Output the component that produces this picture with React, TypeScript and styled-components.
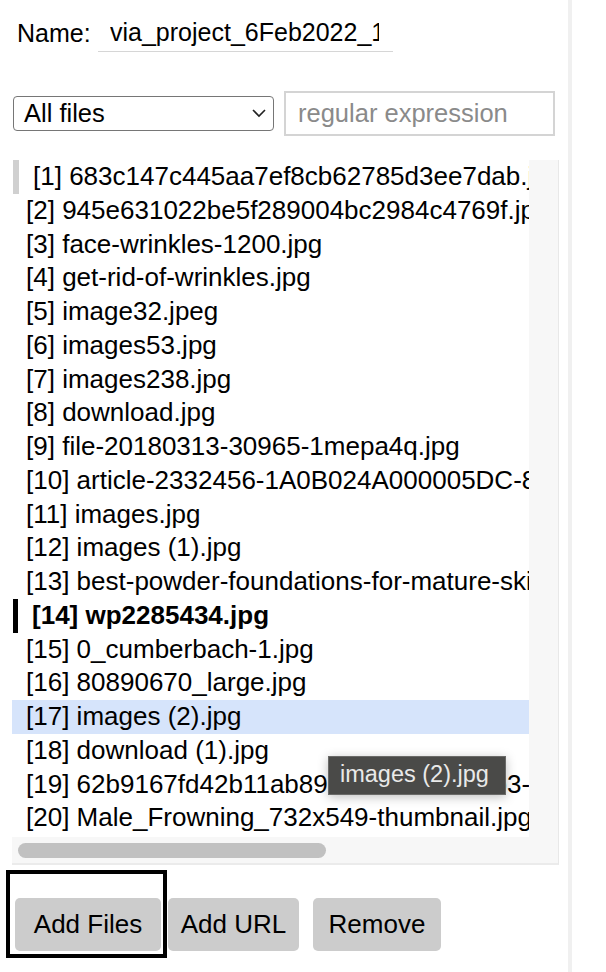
import React from "react";
import styled, { createGlobalStyle } from "styled-components";

const Global = createGlobalStyle`
  html, body { margin: 0; padding: 0; background: #fff; }
  body { font-family: "Liberation Sans", Arial, Helvetica, sans-serif; color: #000; }
`;

const Sidebar = styled.div`
  width: 572px;
  min-height: 972px;
  box-sizing: border-box;
  border-right: 4px solid #f0f0f0;
  padding: 14px 0 0 12px;
  display: flex;
  flex-direction: column;
`;

const NameRow = styled.div`
  display: flex;
  align-items: center;
  height: 38px;
  padding-left: 5px;
  font-size: 25px;
`;

const NameLabel = styled.span`
  width: 81px;
`;

const NameInput = styled.div`
  width: 295px;
  height: 38px;
  box-sizing: border-box;
  border-bottom: 1px solid #d6d6d6;
  padding: 0 14px 0 12px;
  line-height: 36px;
`;

const NameValue = styled.div`
  overflow: hidden;
  white-space: nowrap;
`;

const FilterRow = styled.div`
  display: flex;
  align-items: center;
  gap: 10px;
  margin-top: 39px;
  height: 44px;
`;

const SelectBox = styled.div`
  width: 261px;
  height: 35px;
  box-sizing: border-box;
  margin-left: 1px;
  border: 1px solid #767676;
  border-radius: 4px;
  display: flex;
  align-items: center;
  justify-content: space-between;
  padding: 0 6px 0 10px;
  font-size: 25.5px;
`;

const RegexInput = styled.div`
  width: 271px;
  height: 45px;
  box-sizing: border-box;
  border: 2px solid #d4d4d4;
  display: flex;
  align-items: center;
  padding-left: 12px;
  font-size: 25.5px;
  color: #8a8a8a;
`;

const ListBox = styled.div`
  position: relative;
  margin-top: 25px;
  width: 547px;
  box-sizing: border-box;
  background: #f7f7f7;
  border-right: 1px solid #e8e8e8;
  border-bottom: 2px solid #ebebeb;
  display: flex;
  flex-direction: column;
`;

const Viewport = styled.div`
  width: 517px;
  height: 677px;
  background: #fff;
  overflow: hidden;
`;

const Row = styled.div<{ $mark?: "current" | "active"; $selected?: boolean; $bold?: boolean }>`
  height: 33.75px;
  line-height: 33.75px;
  font-size: 26px;
  white-space: nowrap;
  box-sizing: border-box;
  padding-left: 14px;
  margin-left: ${(p) => (p.$mark ? "1px" : "0")};
  border-left: ${(p) =>
    p.$mark === "current" ? "6px solid #d0d0d0" : p.$mark === "active" ? "5px solid #000" : "0"};
  background: ${(p) => (p.$selected ? "#d6e4fb" : "transparent")};
  font-weight: ${(p) => (p.$bold ? 700 : 400)};
`;

const HScroll = styled.div`
  height: 26px;
  display: flex;
  align-items: center;
  padding-left: 6px;
`;

const Thumb = styled.div`
  width: 308px;
  height: 15px;
  border-radius: 8px;
  background: #c1c1c1;
`;

const Tooltip = styled.div`
  position: absolute;
  left: 316px;
  top: 596px;
  width: 178px;
  height: 39px;
  box-sizing: border-box;
  padding-left: 11px;
  background: #4a4a48;
  border: 1px solid #6a6a68;
  color: #e9e9e9;
  font-size: 23.5px;
  line-height: 35px;
  white-space: nowrap;
  box-shadow: 0 2px 10px rgba(0, 0, 0, 0.25);
`;

const ButtonRow = styled.div`
  display: flex;
  align-items: flex-end;
  margin-left: -6px;
  margin-top: 5px;
`;

const FocusFrame = styled.div`
  border: 4px solid #000;
  padding: 24px 2px 3px 5px;
`;

const Button = styled.button<{ $gap?: number; $w: number; $inFrame?: boolean }>`
  font-family: "Liberation Sans", Arial, Helvetica, sans-serif;
  font-size: 26px;
  color: #000;
  background: #cccccc;
  border: none;
  border-radius: 5px;
  width: ${(p) => p.$w}px;
  height: 53px;
  padding: 0;
  margin: 0 0 ${(p) => (p.$inFrame ? 0 : 7)}px ${(p) => p.$gap ?? 0}px;
`;

const files = [
  "683c147c445aa7ef8cb62785d3ee7dab.jpg",
  "945e631022be5f289004bc2984c4769f.jpg",
  "face-wrinkles-1200.jpg",
  "get-rid-of-wrinkles.jpg",
  "image32.jpeg",
  "images53.jpg",
  "images238.jpg",
  "download.jpg",
  "file-20180313-30965-1mepa4q.jpg",
  "article-2332456-1A0B024A000005DC-875_634x422.jpg",
  "images.jpg",
  "images (1).jpg",
  "best-powder-foundations-for-mature-skin.jpg",
  "wp2285434.jpg",
  "0_cumberbach-1.jpg",
  "80890670_large.jpg",
  "images (2).jpg",
  "download (1).jpg",
  "62b9167fd42b11ab89a6e4f5c0d2e8b3-face.jpg",
  "Male_Frowning_732x549-thumbnail.jpg",
];

export default function App() {
  return (
    <>
      <Global />
      <Sidebar>
        <NameRow>
          <NameLabel>Name:</NameLabel>
          <NameInput>
            <NameValue>via_project_6Feb2022_16h30m</NameValue>
          </NameInput>
        </NameRow>
        <FilterRow>
          <SelectBox>
            <span>All files</span>
            <svg width="16" height="10" viewBox="0 0 16 10">
              <polyline points="2,2 8,8 14,2" fill="none" stroke="#222" strokeWidth="1.6" />
            </svg>
          </SelectBox>
          <RegexInput>regular expression</RegexInput>
        </FilterRow>
        <ListBox>
          <Viewport>
            {files.map((f, i) => (
              <Row
                key={i}
                $mark={i === 0 ? "current" : i === 13 ? "active" : undefined}
                $bold={i === 13}
                $selected={i === 16}
              >
                [{i + 1}] {f}
              </Row>
            ))}
          </Viewport>
          <HScroll>
            <Thumb />
          </HScroll>
          <Tooltip>images (2).jpg</Tooltip>
        </ListBox>
        <ButtonRow>
          <FocusFrame>
            <Button $w={146} $inFrame>
              Add Files
            </Button>
          </FocusFrame>
          <Button $w={131} $gap={1}>
            Add URL
          </Button>
          <Button $w={128} $gap={14}>
            Remove
          </Button>
        </ButtonRow>
      </Sidebar>
    </>
  );
}
